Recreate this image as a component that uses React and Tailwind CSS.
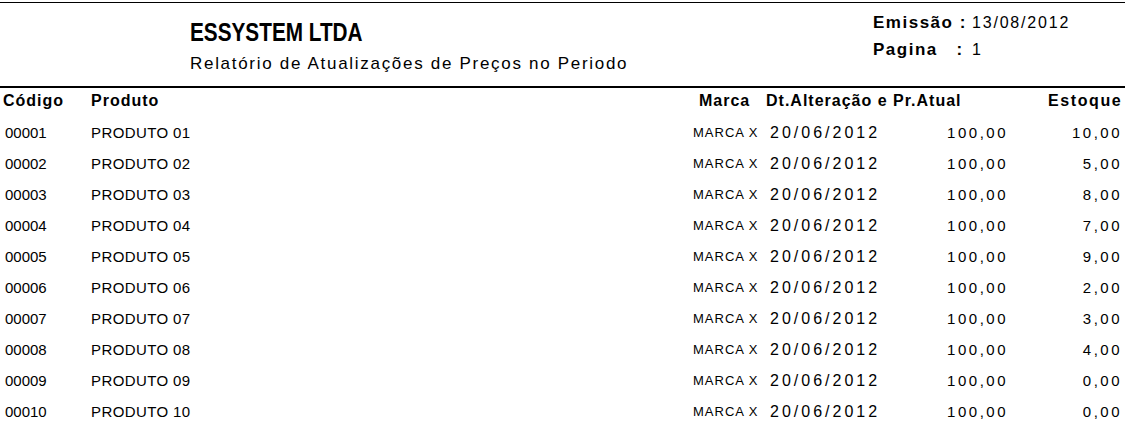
import React from "react";

const rows = [
  { cod: "00001", prod: "PRODUTO 01", est: "10,00" },
  { cod: "00002", prod: "PRODUTO 02", est: "5,00" },
  { cod: "00003", prod: "PRODUTO 03", est: "8,00" },
  { cod: "00004", prod: "PRODUTO 04", est: "7,00" },
  { cod: "00005", prod: "PRODUTO 05", est: "9,00" },
  { cod: "00006", prod: "PRODUTO 06", est: "2,00" },
  { cod: "00007", prod: "PRODUTO 07", est: "3,00" },
  { cod: "00008", prod: "PRODUTO 08", est: "4,00" },
  { cod: "00009", prod: "PRODUTO 09", est: "0,00" },
  { cod: "00010", prod: "PRODUTO 10", est: "0,00" },
];

const App = () => {
  return (
    <div className="w-[1136px] h-[440px] bg-white text-black overflow-hidden font-['Liberation_Sans',Arial,sans-serif] leading-none">
      <div className="pt-[2px]">
        <div className="w-[1125px] h-px bg-black" />
      </div>

      {/* cabeçalho do relatório */}
      <div className="flex h-[83px]">
        <div className="pl-[190px] w-[873px] pt-[17px]">
          <h1 className="text-[25px] font-bold origin-left scale-x-[0.83] w-[240px]">ESSYSTEM LTDA</h1>
          <p className="mt-[10px] text-[17px] tracking-[1.7px]">
            Relatório de Atualizações de Preços no Periodo
          </p>
        </div>
        <div className="pt-[11px] text-[16px]">
          <div className="flex items-baseline">
            <span className="font-bold text-[17px] tracking-[1.5px] w-[99px]">Emissão :</span>
            <span className="tracking-[1.8px]">13/08/2012</span>
          </div>
          <div className="flex items-baseline mt-[10px]">
            <span className="font-bold text-[17px] tracking-[1.5px] w-[99px]">Pagina&nbsp;&nbsp;&nbsp;:</span>
            <span>1</span>
          </div>
        </div>
      </div>

      <div className="w-[1125px] h-[2px] bg-black" />

      {/* títulos das colunas */}
      <div className="flex items-center h-[26px] text-[16px] font-bold tracking-[1px]">
        <span className="w-[90px] pl-[3px]">Código</span>
        <span className="w-[609px] pl-[1px]">Produto</span>
        <span className="w-[67px]">Marca</span>
        <span className="w-[282px]">Dt.Alteração e Pr.Atual</span>
        <span className="tracking-[1.6px]">Estoque</span>
      </div>

      {/* linhas */}
      <div className="pt-[3px]">
        {rows.map((r) => (
          <div key={r.cod} className="flex items-center h-[31px] text-[15px]">
            <span className="w-[91px] pl-[5px]">{r.cod}</span>
            <span className="w-[602px] tracking-[0.4px]">{r.prod}</span>
            <span className="w-[77px] text-[13px] tracking-[1px]">MARCA X</span>
            <span className="w-[120px] text-[16px] tracking-[3px]">20/06/2012</span>
            <span className="w-[118px] text-right tracking-[2.5px]">100,00</span>
            <span className="w-[114px] text-right tracking-[2.5px]">{r.est}</span>
          </div>
        ))}
      </div>
    </div>
  );
};

export default App;
